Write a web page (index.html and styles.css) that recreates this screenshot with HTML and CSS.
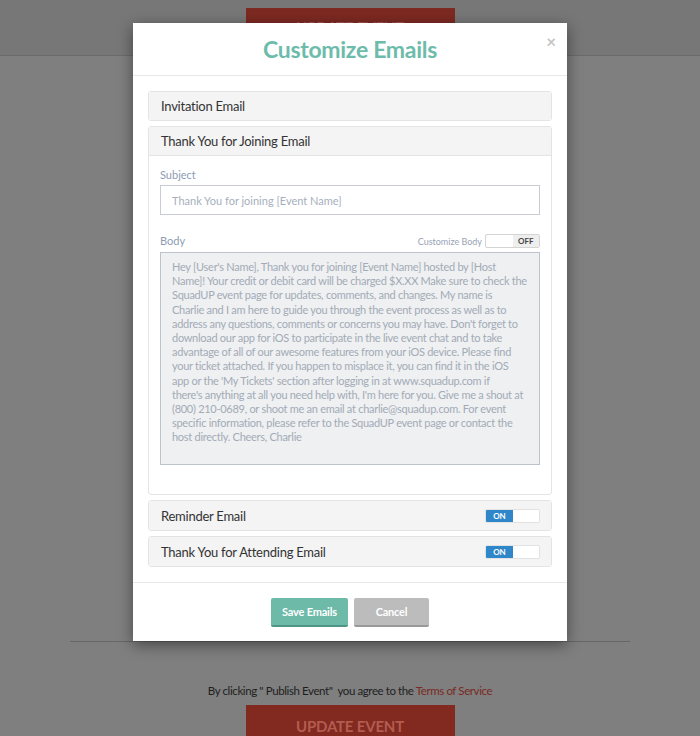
FILE: index.html
```html
<!DOCTYPE html>
<html lang="en">
<head>
    <meta charset="UTF-8">
    <title>Customize Emails</title>
    <link rel="stylesheet" href="styles.css">
</head>
<body>
    <div class="topbar">
        <button class="update-btn">UPDATE EVENT</button>
    </div>
    <div class="form-area"></div>
    <hr class="divider">
    <p class="terms">By clicking " Publish Event"&nbsp; you agree to the <a href="#">Terms of Service</a></p>
    <button class="update-btn">UPDATE EVENT</button>

    <div class="modal">
        <div class="modal-header">
            <h2 class="modal-title">Customize Emails</h2>
            <span class="close">&times;</span>
        </div>
        <div class="modal-body">
            <div class="panel">
                <div class="panel-heading">Invitation Email</div>
            </div>
            <div class="panel">
                <div class="panel-heading open">Thank You for Joining Email</div>
                <div class="panel-body">
                    <label class="field-label">Subject</label>
                    <div class="input">Thank You for joining [Event Name]</div>
                    <div class="body-row">
                        <label class="field-label">Body</label>
                        <div class="customize">
                            Customize Body
                            <span class="toggle off"><span class="half"></span><span class="half">OFF</span></span>
                        </div>
                    </div>
                    <div class="textarea">
                        Hey [User's Name], Thank you for joining [Event Name] hosted by [Host<br>
                        Name]! Your credit or debit card will be charged $X.XX Make sure to check the<br>
                        SquadUP event page for updates, comments, and changes. My name is<br>
                        Charlie and I am here to guide you through the event process as well as to<br>
                        address any questions, comments or concerns you may have. Don't forget to<br>
                        download our app for iOS to participate in the live event chat and to take<br>
                        advantage of all of our awesome features from your iOS device. Please find<br>
                        your ticket attached. If you happen to misplace it, you can find it in the iOS<br>
                        app or the 'My Tickets' section after logging in at www.squadup.com if<br>
                        there's anything at all you need help with, I'm here for you. Give me a shout at<br>
                        (800) 210-0689, or shoot me an email at charlie@squadup.com. For event<br>
                        specific information, please refer to the SquadUP event page or contact the<br>
                        host directly. Cheers, Charlie
                    </div>
                </div>
            </div>
            <div class="panel">
                <div class="panel-heading row">
                    Reminder Email
                    <span class="toggle on"><span class="half">ON</span><span class="half"></span></span>
                </div>
            </div>
            <div class="panel">
                <div class="panel-heading row">
                    Thank You for Attending Email
                    <span class="toggle on"><span class="half">ON</span><span class="half"></span></span>
                </div>
            </div>
        </div>
        <div class="modal-footer">
            <button class="btn btn-save">Save Emails</button>
            <button class="btn btn-cancel">Cancel</button>
        </div>
    </div>
</body>
</html>
```

FILE: styles.css
```css
body {
    margin: 0;
    background: #7f7f7f;
    font-family: Lato, "Open Sans", sans-serif;
    position: relative;
    min-height: 736px;
    overflow: hidden;
}
.topbar {
    height: 56px;
    background: #777;
    border-bottom: 1px solid #6b6b6b;
    padding-top: 8px;
    box-sizing: border-box;
}
.update-btn {
    display: block;
    margin: 0 auto;
    width: 209px;
    height: 42px;
    border: none;
    background: #822a20;
    color: #b35c50;
    font-family: Lato, sans-serif;
    font-weight: bold;
    font-size: 15px;
    letter-spacing: -0.2px;
}
.topbar .update-btn {
    height: 15px;
    padding: 12px 0 0;
    overflow: hidden;
    background: #7c2921;
    color: #a3564b;
    line-height: 15px;
}
.form-area {
    height: 585px;
}
.divider {
    margin: 0 70px;
    border: none;
    border-top: 1px solid #666;
}
.terms {
    margin: 42px 0 8px;
    text-align: center;
    font-size: 11.5px;
    letter-spacing: -0.4px;
    color: #1e1e1e;
}
.terms a {
    color: #7a2a22;
    text-decoration: none;
}

/* modal */
.modal {
    position: absolute;
    top: 23px;
    left: 133px;
    width: 434px;
    background: #fff;
    box-shadow: 0 4px 14px rgba(0,0,0,0.45);
}
.modal-header {
    height: 52px;
    border-bottom: 1px solid #e8e8e8;
    display: flex;
    align-items: center;
    justify-content: center;
    position: relative;
}
.modal-title {
    margin: 0;
    font-size: 23px;
    font-weight: 700;
    color: #6dbcab;
    letter-spacing: -0.3px;
}
.close {
    position: absolute;
    right: 11px;
    top: 8px;
    font-size: 17px;
    font-weight: bold;
    color: #c4c4c4;
}
.modal-body {
    padding: 15px;
}
.panel {
    border: 1px solid #e4e4e4;
    border-radius: 3px;
    margin-bottom: 5px;
    background: #fff;
}
.panel:last-child {
    margin-bottom: 0;
}
.panel-heading {
    height: 28px;
    padding: 0 11px 0 12px;
    background: #f4f4f4;
    display: flex;
    align-items: center;
    font-size: 13px;
    color: #333;
    letter-spacing: -0.25px;
}
.panel-heading.open {
    border-bottom: 1px solid #e4e4e4;
}
.panel-heading.row {
    height: 29px;
    justify-content: space-between;
}
.panel-body {
    padding: 11px 11px 29px;
}
.field-label {
    display: block;
    font-size: 11px;
    line-height: 16px;
    color: #8d9db4;
    margin-bottom: 2px;
}
.input {
    height: 28px;
    border: 1px solid #c9cdd3;
    padding: 0 11px;
    display: flex;
    align-items: center;
    font-size: 11px;
    color: #a6afbd;
}
.body-row {
    display: flex;
    justify-content: space-between;
    align-items: center;
    margin-top: 18px;
    margin-bottom: 3px;
}
.body-row .field-label {
    margin: 0;
}
.customize {
    display: flex;
    align-items: center;
    gap: 3px;
    font-size: 9px;
    color: #97a3b5;
}
.toggle {
    display: inline-flex;
    width: 53px;
    height: 12px;
    border: 1px solid #d4d4d4;
    border-radius: 2px;
    overflow: hidden;
    font-size: 8px;
    font-weight: bold;
    line-height: 12px;
    background: #fff;
}
.toggle .half {
    flex: 1;
    text-align: center;
}
.toggle.off .half + .half {
    background: #eee;
    color: #444;
}
.toggle.on {
    border-color: #e2e2e2;
}
.toggle.on .half:first-child {
    background: #2f87ca;
    color: #fff;
}
.textarea {
    height: 197px;
    border: 1px solid #bcc3cd;
    background: #eff0f1;
    padding: 7px 11px;
    font-size: 11px;
    line-height: 14.2px;
    color: #a2abb7;
    white-space: nowrap;
    letter-spacing: -0.28px;
}
.modal-footer {
    border-top: 1px solid #e8e8e8;
    padding: 15px 15px 14px;
    display: flex;
    justify-content: center;
    gap: 6px;
}
.btn {
    height: 29px;
    border: none;
    border-radius: 2px;
    color: #fff;
    font-family: Lato, sans-serif;
    font-weight: bold;
    font-size: 11px;
    letter-spacing: -0.2px;
}
.btn-save {
    width: 77px;
    background: #6dbaa9;
    border-bottom: 2px solid #4f9585;
}
.btn-cancel {
    width: 75px;
    background: #bcbcbc;
    border-bottom: 2px solid #999;
}
```
